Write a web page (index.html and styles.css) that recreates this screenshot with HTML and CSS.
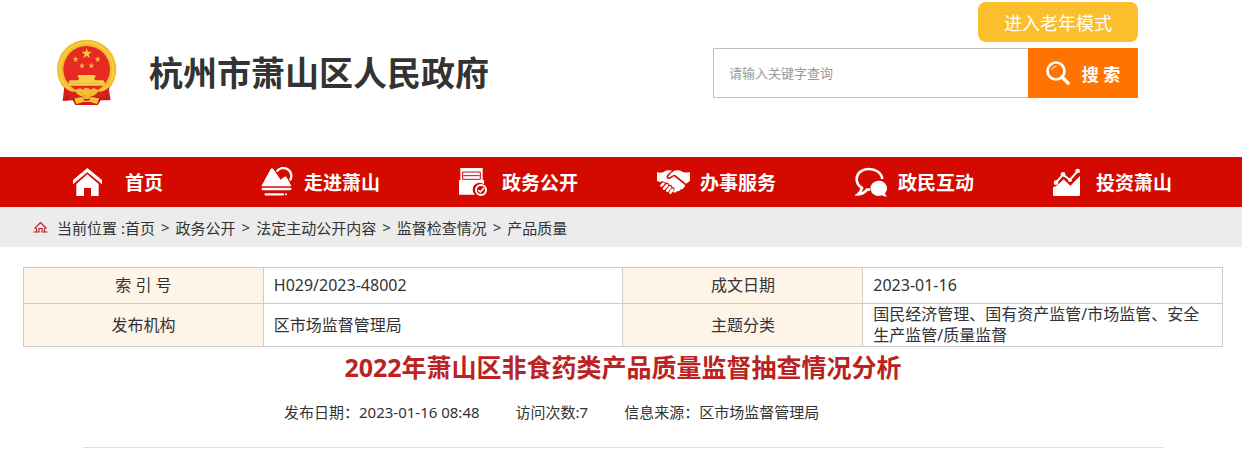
FILE: index.html
```html
<!DOCTYPE html>
<html lang="zh-CN">
<head>
    <meta charset="UTF-8">
    <meta name="viewport" content="width=device-width, initial-scale=1.0">
    <title>2022年萧山区非食药类产品质量监督抽查情况分析</title>
    <link rel="stylesheet" href="styles.css">
</head>
<body>
    <header class="header">
        <a class="logo" href="#">
            <svg class="emblem" viewBox="48 28 186 201" aria-hidden="true">
                <path d="M74 164 L68 214 L98 212 L106 226 L174 226 L182 212 L212 212 L204 164 Z" fill="#d41c1c"/>
                <path d="M84 195 L80 212 M196 195 L202 210 M98 200 L102 214 M182 200 L178 214" stroke="#a81218" stroke-width="3"/>
                <circle cx="140" cy="119" r="89" fill="#f3bd2f"/>
                <circle cx="140" cy="119" r="80" fill="none" stroke="#f8cf4c" stroke-width="5"/>
                <circle cx="140" cy="119" r="70" fill="#e62a22"/>
                <path d="M140 54 L143.500 66 L156 66 L146 73.500 L150 86 L140 78 L130 86 L134 73.500 L124 66 L136.500 66 Z" fill="#f8c93a"/>
                <g fill="#f8c93a">
                    <path id="small-star" d="M107 80 L109 86 L116 86 L110 90 L113 97 L107 93 L101 97 L104 90 L98 86 L105 86 Z"/>
                    <use href="#small-star" x="66"/>
                    <use href="#small-star" x="19" y="19"/>
                    <use href="#small-star" x="47" y="19"/>
                </g>
                <path d="M116 136 H164 L168 142 H164 V152 H190 L194 156 V168 H86 V156 L90 152 H116 V142 H112 Z" fill="#f8cf49"/>
                <path d="M88 161 H192" stroke="#e8ae2c" stroke-width="2"/>
                <path d="M72 172 Q98 196 118 180 Q130 174 140 182 Q150 174 162 180 Q182 196 208 172 L206 198 L180 204 L140 202 L100 204 L74 198 Z" fill="#d5221f"/>
                <path d="M104 184 Q116 170 128 180 Q140 168 152 180 Q164 170 176 184 Q164 202 140 203 Q116 202 104 184 Z" fill="#f5bf33"/>
                <path d="M122 188 Q132 200 140 200 Q148 200 158 188" fill="none" stroke="#d98f1c" stroke-width="2"/>
                <path d="M103 206 L126 204 L134 213 L146 213 L154 204 L178 206 L171 223 L150 217 L130 217 L109 223 Z" fill="#f5c338"/>
            </svg>
            <span class="site-name">杭州市萧山区人民政府</span>
        </a>
        <div class="tools">
            <button type="button" class="elder-btn">进入老年模式</button>
            <form class="search" action="#">
                <input type="text" class="search-input" placeholder="请输入关键字查询" aria-label="请输入关键字查询">
                <button type="submit" class="search-btn">
                    <svg class="search-icon" viewBox="0 0 24 24" aria-hidden="true">
                        <circle cx="10" cy="10" r="8.500" fill="none" stroke="#fff" stroke-width="2.600"/>
                        <path d="M5.500 8.500 Q7 5.500 10.500 5.300" fill="none" stroke="#fff" stroke-width="1"/>
                        <path d="M16 16 L22 22" stroke="#fff" stroke-width="3.600" stroke-linecap="round"/>
                    </svg>
                    搜 索
                </button>
            </form>
        </div>
    </header>

    <nav class="nav">
        <ul class="nav-list">
            <li><a class="nav-link nav-home" href="#">
                <span class="nav-icon"><svg viewBox="39 36 99 90" aria-hidden="true">
                    <path d="M82 39 L126 75 V88 L82 52 L39 88 V75 Z"/>
                    <path d="M82 58 L116 87 V123 H93 V99 H72 V123 H49 V87 Z"/>
                </svg></span>
                <span class="nav-text">首页</span>
            </a></li>
            <li><a class="nav-link" href="#">
                <span class="nav-icon"><svg viewBox="33 36 99 90" aria-hidden="true">
                    <path d="M80 50 A22 22 0 1 1 120 76" fill="none" stroke="#fff" stroke-width="7"/>
                    <path d="M34 94 L62 42 Q66 38 70 42 L92 74 L103 65 Q106 63 109 66 L118 80 L124 94 Z"/>
                    <path d="M38 102 H121 M47 118 H99" fill="none" stroke="#fff" stroke-width="7" stroke-linecap="round"/>
                    <circle cx="108" cy="118" r="3"/>
                </svg></span>
                <span class="nav-text">走进萧山</span>
            </a></li>
            <li><a class="nav-link" href="#">
                <span class="nav-icon"><svg viewBox="42 36 99 90" aria-hidden="true">
                    <path d="M46 39 H113 V75 H117 V88 A19 19 0 0 0 90 119 H42 V75 H46 Z"/>
                    <path d="M53 73 V51 H106 V73 M55 62 H104 M53 73 H106" fill="none" stroke="#d40a00" stroke-width="3"/>
                    <circle cx="108" cy="105" r="15" fill="none" stroke="#fff" stroke-width="6"/>
                    <path d="M100 105 L106 111 L117 99" fill="none" stroke="#fff" stroke-width="5"/>
                </svg></span>
                <span class="nav-text">政务公开</span>
            </a></li>
            <li><a class="nav-link" href="#">
                <span class="nav-icon"><svg viewBox="51 36 99 90" aria-hidden="true">
                    <path d="M51 51 Q62 56 72 50 Q82 44 96 47 L84 57 Q77 64 80 69 Q86 75 95 68 L102 64 L134 89 Q137 95 131 98 Q129 104 122 103 Q119 110 112 108 Q106 116 99 110 L104 103 Q104 96 97 96 Q96 88 88 89 Q85 80 76 83 Q68 76 62 81 L51 78 Z"/>
                    <path d="M150 51 V78 L138 86 L105 59 Q97 60 91 65 Q86 68 84 65 Q92 52 103 47 Q116 43 127 50 Q138 55 150 51 Z"/>
                    <path d="M64 92 L70 86 M72 101 L81 91 M82 107 L90 97 M91 113 L97 104" fill="none" stroke="#fff" stroke-width="8" stroke-linecap="round"/>
                </svg></span>
                <span class="nav-text">办事服务</span>
            </a></li>
            <li><a class="nav-link" href="#">
                <span class="nav-icon"><svg viewBox="645 36 99 90" aria-hidden="true">
                    <path d="M727 72 C722 32 650 32 650 73 Q650 89 666 99 Q663 111 654 118 Q671 117 681 104 L690 104" fill="none" stroke="#fff" stroke-width="8"/>
                    <path d="M717 77 A24 23 0 0 1 735 115 Q736 121 741 125 Q731 125 725 121 A24 23 0 1 1 717 77 Z"/>
                </svg></span>
                <span class="nav-text">政民互动</span>
            </a></li>
            <li><a class="nav-link" href="#">
                <span class="nav-icon"><svg viewBox="69 36 99 90" aria-hidden="true">
                    <path d="M69 97 L80 92 L101 73 L121 92 L150 63 V119 Q150 123 146 123 H73 Q69 123 69 119 Z"/>
                    <path d="M78 83 L99 59 L120 75 L143 48" fill="none" stroke="#fff" stroke-width="6"/>
                    <circle cx="78" cy="83" r="7"/><circle cx="99" cy="58" r="7"/>
                    <circle cx="120" cy="75" r="6"/><circle cx="143" cy="48" r="7"/>
                </svg></span>
                <span class="nav-text">投资萧山</span>
            </a></li>
        </ul>
    </nav>

    <div class="crumbs">
        <svg class="crumb-icon" viewBox="0 0 15 12" aria-hidden="true">
            <path d="M1.500 7.500 L7.500 1.500 L13.500 7.500 M3.500 7 V10.500 M11.500 7 V10.500 M0.500 11 H6 V7.500 H9 V11 H14.500" fill="none" stroke="#bb2222" stroke-width="1.200"/>
        </svg>
        <span>当前位置 :</span><a href="#">首页</a><span class="sep">&gt;</span><a href="#">政务公开</a><span class="sep">&gt;</span><a href="#">法定主动公开内容</a><span class="sep">&gt;</span><a href="#">监督检查情况</a><span class="sep">&gt;</span><a href="#">产品质量</a>
    </div>

    <main class="content">
        <table class="info">
            <tr>
                <th scope="row">索 引 号</th>
                <td>H029/2023-48002</td>
                <th scope="row">成文日期</th>
                <td>2023-01-16</td>
            </tr>
            <tr>
                <th scope="row">发布机构</th>
                <td>区市场监督管理局</td>
                <th scope="row">主题分类</th>
                <td>国民经济管理、国有资产监管/市场监管、安全生产监管/质量监督</td>
            </tr>
        </table>
        <h1 class="title">2022年萧山区非食药类产品质量监督抽查情况分析</h1>
        <div class="meta">
            <span>发布日期：2023-01-16 08:48</span>
            <span>访问次数:7</span>
            <span>信息来源：区市场监督管理局</span>
        </div>
    </main>
</body>
</html>
```

FILE: styles.css
```css
* {
    box-sizing: border-box;
}
body {
    margin: 0;
    background-color: #fff;
    color: #333;
    font-family: "Noto Sans", "Noto Sans CJK SC", sans-serif;
    font-size: 15px;
}
a {
    color: inherit;
    text-decoration: none;
}
button, input {
    font-family: inherit;
}

/* header */
.header {
    display: flex;
    justify-content: space-between;
    align-items: flex-start;
    padding: 2px 104px 51px 56px;
}
.logo {
    display: flex;
    align-items: center;
    gap: 31px;
    padding-top: 37px;
}
.emblem {
    width: 62px;
    height: 67px;
}
.site-name {
    font-size: 34px;
    font-weight: bold;
    line-height: 40px;
    white-space: nowrap;
}
.tools {
    display: flex;
    flex-direction: column;
    align-items: flex-end;
    gap: 6px;
}
.elder-btn {
    width: 160px;
    height: 40px;
    padding: 0;
    border: none;
    border-radius: 8px;
    background-color: #fbbe2d;
    color: #fff;
    font-size: 18px;
    cursor: pointer;
}
.search {
    display: flex;
    height: 50px;
}
.search-input {
    width: 315px;
    padding: 0 15px;
    border: 1px solid #bfbfbf;
    border-right: none;
    font-size: 13px;
}
.search-input::placeholder {
    color: #999;
}
.search-btn {
    display: flex;
    align-items: center;
    justify-content: center;
    gap: 12px;
    width: 110px;
    padding: 0;
    border: none;
    background-color: #ff7300;
    color: #fff;
    font-size: 17px;
    font-weight: bold;
    cursor: pointer;
}
.search-icon {
    width: 24px;
    height: 24px;
}

/* main nav */
.nav {
    background-color: #d40a00;
}
.nav-list {
    display: grid;
    grid-template-columns: repeat(6, 1fr);
    max-width: 1188px;
    margin: 0 auto;
    padding: 0;
    list-style: none;
}
.nav-link {
    display: flex;
    align-items: center;
    height: 50px;
    padding-left: 36px;
    color: #fff;
    font-size: 19px;
    font-weight: bold;
}
.nav-icon {
    display: flex;
    width: 43px;
}
.nav-icon svg {
    width: 33px;
    height: 30px;
    fill: #fff;
}
.nav-home .nav-icon {
    padding-left: 10px;
}
.nav-text {
    width: 76px;
    text-align: center;
    white-space: nowrap;
}

/* breadcrumb */
.crumbs {
    display: flex;
    align-items: center;
    height: 40px;
    padding-left: 33px;
    background-color: #ececec;
}
.crumb-icon {
    width: 15px;
    height: 12px;
    margin-right: 9px;
}
.sep {
    margin: 0 6px;
}

/* article */
.content {
    padding: 20px 19px 0 23px;
}
.info {
    width: 100%;
    border-collapse: collapse;
    table-layout: fixed;
    font-size: 16px;
    line-height: 21px;
}
.info th, .info td {
    height: 36px;
    padding: 0 10px;
    border: 1px solid #ccc;
}
.info th {
    width: 20%;
    background-color: #fff4e8;
    font-weight: normal;
}
.info td {
    width: 30%;
}
.title {
    margin: 0;
    color: #bb2222;
    font-size: 25px;
    line-height: 40px;
    text-align: center;
}
.meta {
    display: flex;
    gap: 36px;
    margin: 0 60px;
    padding: 15px 0 24px 201px;
    border-bottom: 1px solid #ddd;
    line-height: 21px;
}
```
